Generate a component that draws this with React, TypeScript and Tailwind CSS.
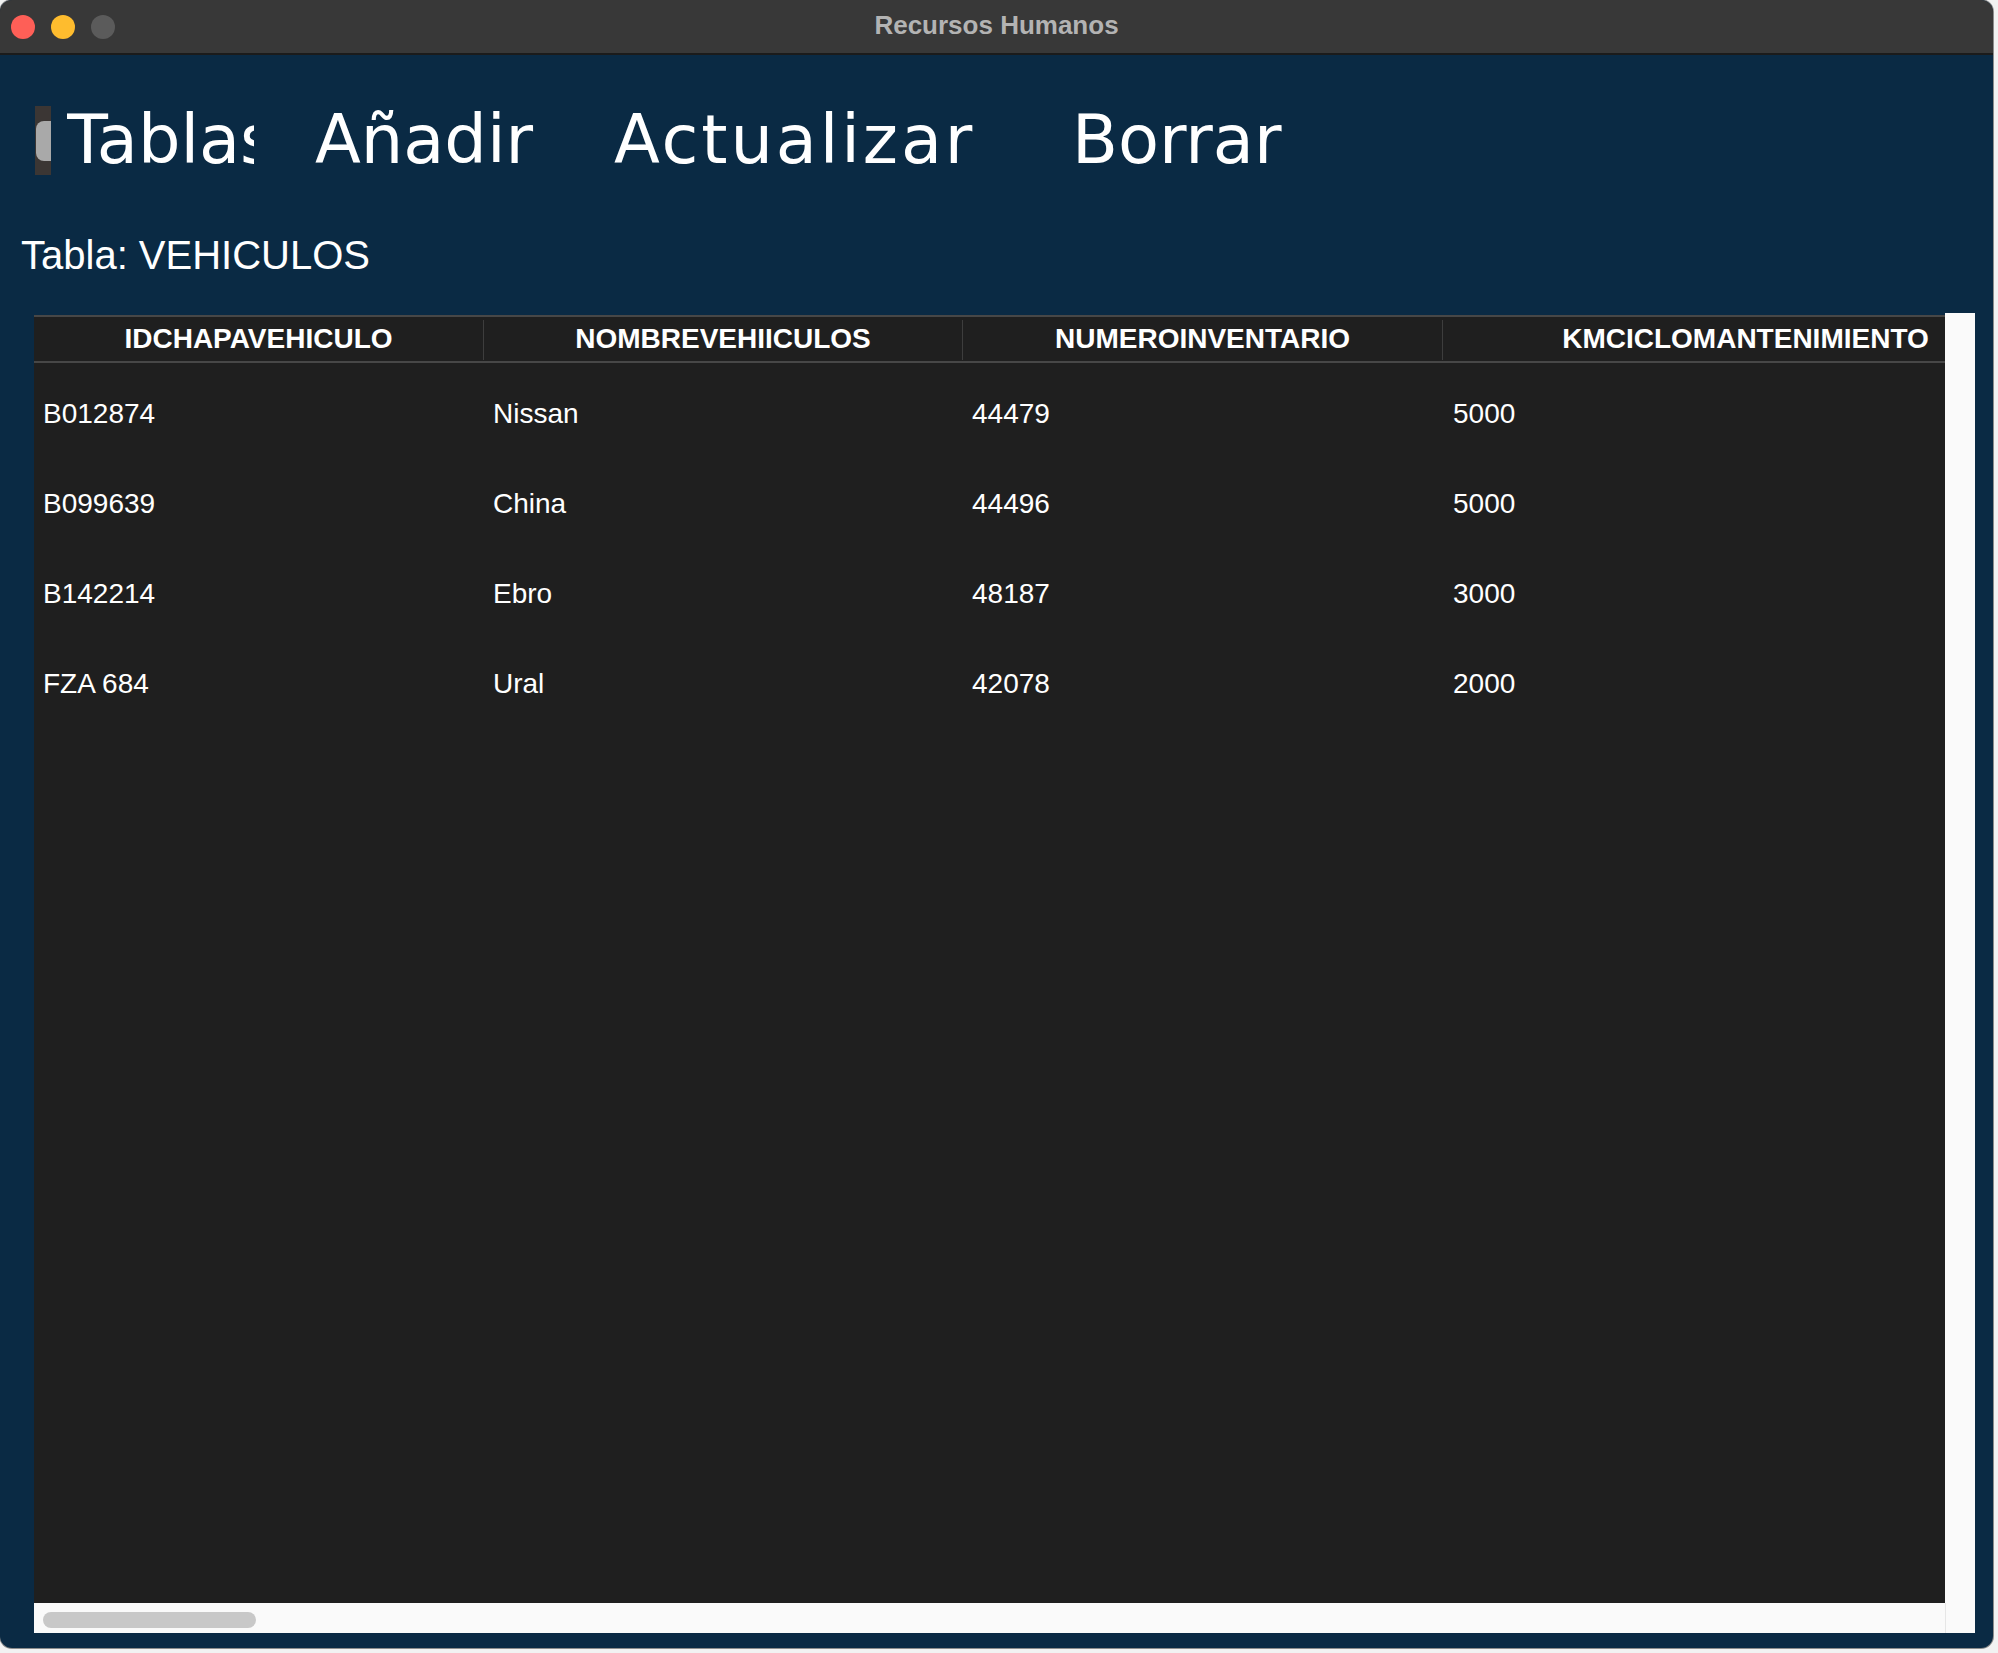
import React from "react";

type Vehiculo = {
  chapa: string;
  nombre: string;
  inventario: string;
  km: string;
};

const VEHICULOS: Vehiculo[] = [
  { chapa: "B012874", nombre: "Nissan", inventario: "44479", km: "5000" },
  { chapa: "B099639", nombre: "China", inventario: "44496", km: "5000" },
  { chapa: "B142214", nombre: "Ebro", inventario: "48187", km: "3000" },
  { chapa: "FZA 684", nombre: "Ural", inventario: "42078", km: "2000" },
];

const COLUMNS = [
  { label: "IDCHAPAVEHICULO", width: "w-[449px]" },
  { label: "NOMBREVEHIICULOS", width: "w-[478px]" },
  { label: "NUMEROINVENTARIO", width: "w-[479px]" },
  { label: "KMCICLOMANTENIMIENTO", width: "w-[605px]" },
];

function TitleBar() {
  return (
    <div className="relative h-[55px] shrink-0 bg-[#383838] border-b-2 border-[#1b1b1b] flex items-center">
      {/* traffic lights */}
      <div className="flex items-center gap-[16px] pl-[11px] pt-[1px]">
        <div className="w-[24px] h-[24px] rounded-full bg-[#fe5f57]" />
        <div className="w-[24px] h-[24px] rounded-full bg-[#febc2e]" />
        <div className="w-[24px] h-[24px] rounded-full bg-[#5b5b5b]" />
      </div>
      <div className="absolute inset-0 flex items-center justify-center pb-[2px]">
        <span className="font-['Liberation_Sans',Arial,sans-serif] font-bold text-[26px] text-[#b3b3b3]">
          Recursos Humanos
        </span>
      </div>
    </div>
  );
}

function Menu() {
  const item = "font-['DejaVu_Sans',Verdana,sans-serif] text-[67px] leading-[78px] text-white whitespace-nowrap";
  return (
    <div className="flex items-start pt-[46px] pl-[35px] h-[124px] shrink-0">
      {/* clipped combo handle */}
      <div className="mt-[5px] w-[16px] h-[69px] bg-[#3b3634] flex items-center">
        <div className="w-[15px] h-[40px] ml-[1px] bg-[#a9a9a9] rounded-l-[8px]" />
      </div>
      <div className={`${item} ml-[16px] w-[187px] overflow-hidden`}>Tablas</div>
      <div className={`${item} ml-[61px] w-[299px]`}>Añadir</div>
      <div className={`${item} ml-0 w-[458px] tracking-[2.9px]`}>Actualizar</div>
      <div className={item}>Borrar</div>
    </div>
  );
}

function Table() {
  return (
    <div className="flex ml-[34px] w-[1941px] h-[1320px] mt-[35px]">
      <div className="w-[1911px] flex flex-col">
        <div className="h-[2px]" />
        <div className="flex-1 bg-[#1f1f1f] overflow-hidden font-['Liberation_Sans',Arial,sans-serif]">
          {/* header */}
          <div className="flex items-center h-[48px] border-y-2 border-[#474747] w-max">
            {COLUMNS.map((col, i) => (
              <React.Fragment key={col.label}>
                {i > 0 && <div className="w-px h-[40px] bg-[#3d3d3d] mt-[2px]" />}
                <div className={`${col.width} text-center font-bold text-[28px] text-white whitespace-nowrap`}>
                  {col.label}
                </div>
              </React.Fragment>
            ))}
          </div>
          {/* rows */}
          <div className="pt-[6px]">
            {VEHICULOS.map((v) => (
              <div key={v.chapa} className="flex items-center h-[90px] text-[28px] text-white w-max">
                <div className="w-[450px] pl-[9px]">{v.chapa}</div>
                <div className="w-[479px] pl-[9px]">{v.nombre}</div>
                <div className="w-[480px] pl-[9px]">{v.inventario}</div>
                <div className="w-[605px] pl-[10px]">{v.km}</div>
              </div>
            ))}
          </div>
        </div>
        {/* horizontal scrollbar */}
        <div className="h-[30px] bg-[#fafafa] pt-[9px] pl-[9px]">
          <div className="w-[213px] h-[16px] rounded-full bg-[#c8c8c8]" />
        </div>
      </div>
      {/* vertical scrollbar */}
      <div className="w-[30px] bg-[#fafafa] flex flex-col">
        <div className="flex-1" />
        <div className="h-[30px] border-l border-[#e6e6e6]" />
      </div>
    </div>
  );
}

export default function App() {
  return (
    <div className="w-[1998px] h-[1653px] bg-[#f2f2f2]">
      <div className="w-[1993px] h-[1648px] rounded-[12px] overflow-hidden flex flex-col bg-[#0a2a44] shadow-[0_0_0_1px_#8d8d8d]">
        <TitleBar />
        <div className="flex-1 flex flex-col">
          <Menu />
          <div className="pl-[21px] mt-[54px] h-[45px] font-['Liberation_Sans',Arial,sans-serif] text-[40px] leading-[45px] text-white">
            Tabla: VEHICULOS
          </div>
          <Table />
        </div>
      </div>
    </div>
  );
}
